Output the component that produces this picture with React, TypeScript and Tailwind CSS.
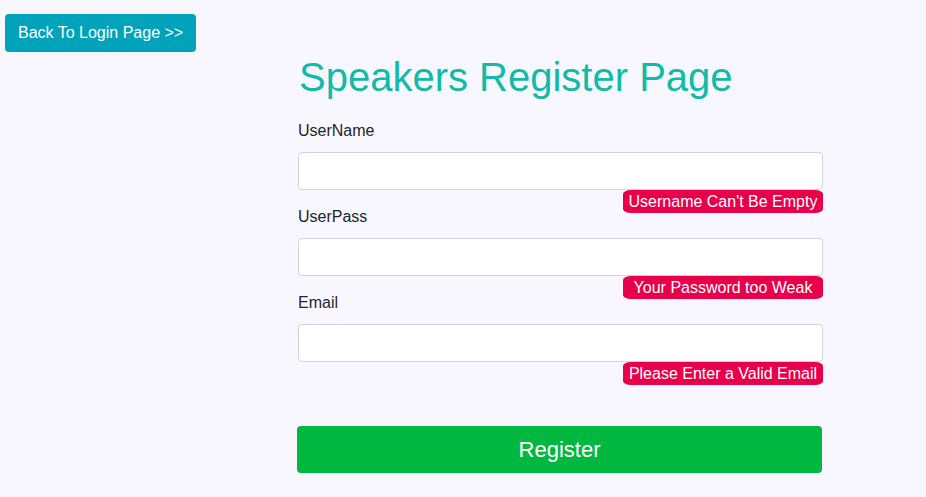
export default function App() {
  const fields = [
    { label: 'UserName', error: "Username Can't Be Empty", type: 'text' },
    { label: 'UserPass', error: 'Your Password too Weak', type: 'password' },
    { label: 'Email', error: 'Please Enter a Valid Email', type: 'email' },
  ];

  return (
    <div className="min-h-[497px] bg-[#f8f7ff] font-['Liberation_Sans',Arial,sans-serif] text-[#212529]">
      <div className="pt-[14px] pl-[5px]">
        <button className="h-[38px] px-[13px] bg-[#00a3b9] text-white text-[16px] rounded-[4px]">
          Back To Login Page &gt;&gt;
        </button>
      </div>

      <div className="ml-[298px] w-[525px]">
        <h1 className="mt-[1px] ml-[1px] text-[40px] leading-[48px] text-[#12bba8]">
          Speakers Register Page
        </h1>

        <form className="mt-[18px]" onSubmit={(e) => e.preventDefault()}>
          {fields.map((f) => (
            <div key={f.label} className="mb-[15px]">
              <label className="block text-[16px] leading-[24px]">{f.label}</label>
              <div className="relative mt-[9px]">
                <input
                  type={f.type}
                  className="block w-[525px] h-[38px] bg-white border border-[#ced4da] rounded-[4px] px-3 outline-none"
                />
                <span className="absolute right-0 top-[38px] w-[200px] h-[23px] bg-[#e8004a] text-white text-center text-[16px] leading-[23px] rounded-[8px/4px]">
                  {f.error}
                </span>
              </div>
            </div>
          ))}

          <button className="mt-[49px] -ml-[1px] w-[525px] h-[47px] bg-[#00b83f] text-white text-[22px] rounded-[4px]">
            Register
          </button>
        </form>
      </div>
    </div>
  );
}
